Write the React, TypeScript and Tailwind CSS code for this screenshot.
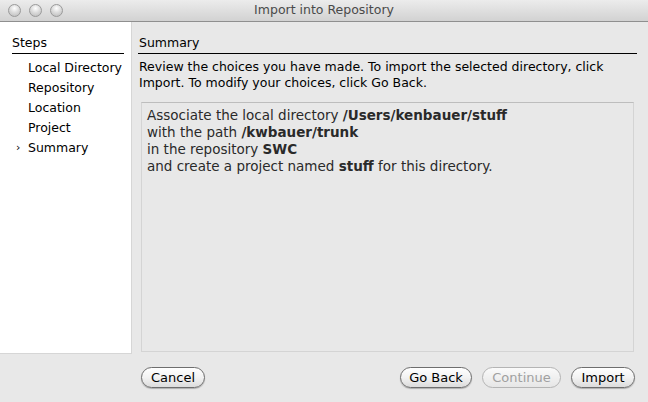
import React from "react";

const steps = ["Local Directory", "Repository", "Location", "Project", "Summary"];

function TrafficLight() {
  return (
    <span className="h-[13px] w-[13px] rounded-full border border-[#9a9a9a] bg-[radial-gradient(circle_at_50%_30%,#ffffff_0%,#dcdcdc_45%,#b8b8b8_100%)]" />
  );
}

function MacButton({ label, disabled, className }: { label: string; disabled?: boolean; className?: string }) {
  return (
    <button
      type="button"
      disabled={disabled}
      className={
        "flex h-[21px] items-center justify-center rounded-full border text-[13px] leading-none " +
        (disabled
          ? "border-[#b4b4b4] bg-gradient-to-b from-[#fafafa] to-[#e6e6e6] text-[#a0a0a0] "
          : "border-[#6e6e6e] bg-gradient-to-b from-[#ffffff] via-[#f2f2f2] to-[#dcdcdc] text-black shadow-[0_1px_1px_rgba(0,0,0,0.25)] ") +
        (className ?? "")
      }
    >
      {label}
    </button>
  );
}

export default function App() {
  return (
    <div className="flex h-[402px] w-[648px] flex-col overflow-hidden bg-[#e8e8e8] font-['DejaVu_Sans',sans-serif] text-[12.5px] text-black">
      {/* title bar */}
      <div className="relative flex h-[22px] shrink-0 items-center justify-center border-b border-[#8f8f8f] bg-gradient-to-b from-[#ececec] to-[#d2d2d2]">
        <div className="absolute left-[8px] top-[4px] flex gap-[8px]">
          <TrafficLight />
          <TrafficLight />
          <TrafficLight />
        </div>
        <span className="text-[12.5px] text-[#4a4a4a]">Import into Repository</span>
      </div>

      <div className="flex h-[332px] shrink-0">
        {/* steps */}
        <div className="w-[132px] shrink-0 border-r border-b border-[#d6d6d6] bg-white pl-[12px] pr-[7px] pt-[13px]">
          <div className="border-b border-black pb-[2px] leading-[16px]">Steps</div>
          <ul className="mt-[4px]">
            {steps.map((s) => (
              <li key={s} className="flex h-[20px] items-center whitespace-nowrap leading-[20px]">
                <span className="w-[16px] pl-[4px] text-[11px]">{s === "Summary" ? "›" : ""}</span>
                {s}
              </li>
            ))}
          </ul>
        </div>

        {/* summary */}
        <div className="flex flex-1 flex-col pl-[6px] pr-[11px] pt-[13px]">
          <div className="border-b border-black pb-[2px] pl-[1px] leading-[16px]">Summary</div>
          <p className="mt-[5px] pl-[1px] leading-[16px]">
            Review the choices you have made. To import the selected directory, click Import. To modify your choices,
            click Go Back.
          </p>
          <div className="mb-[2px] ml-[3px] mr-[3px] mt-[11px] flex-1 border border-[#d4d4d4] border-t-[#bdbdbd] px-[5px] pt-[4px] text-[13.5px] leading-[17px] text-[#2a2a2a]">
            <div>
              Associate the local directory <b>/Users/kenbauer/stuff</b>
            </div>
            <div>
              with the path <b>/kwbauer/trunk</b>
            </div>
            <div>
              in the repository <b>SWC</b>
            </div>
            <div>
              and create a project named <b>stuff</b> for this directory.
            </div>
          </div>
        </div>
      </div>

      {/* buttons */}
      <div className="flex pl-[141px] pr-[13px] pt-[13px]">
        <MacButton label="Cancel" className="w-[64px]" />
        <div className="ml-auto flex gap-[10px]">
          <MacButton label="Go Back" className="w-[72px]" />
          <MacButton label="Continue" disabled className="w-[79px]" />
          <MacButton label="Import" className="w-[64px]" />
        </div>
      </div>
    </div>
  );
}
